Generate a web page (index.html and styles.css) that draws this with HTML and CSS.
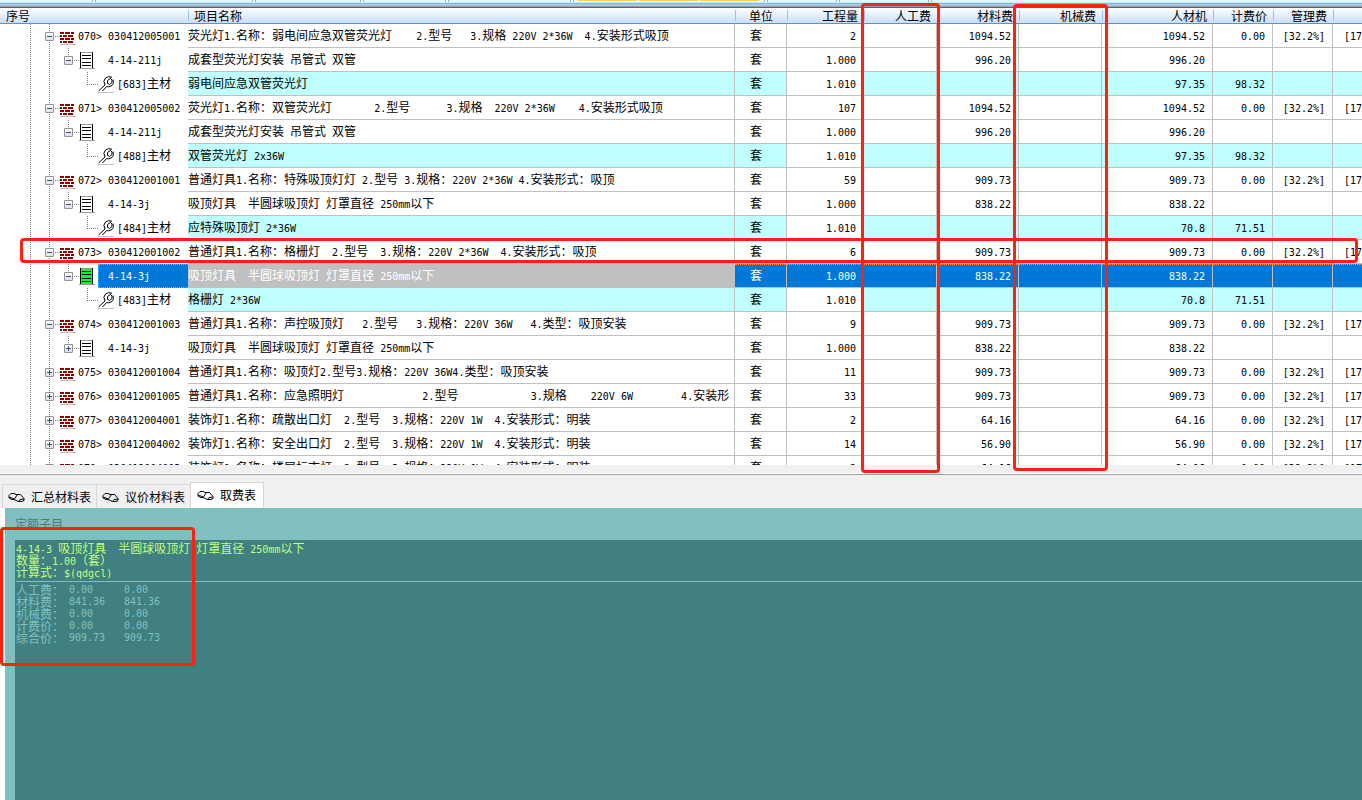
FILE: index.html
```html
<!DOCTYPE html>
<html lang="zh-CN">
<head>
<meta charset="utf-8">
<title>工程量清单</title>
<link rel="stylesheet" href="styles.css">
</head>
<body>
<svg class="sprite" aria-hidden="true">
  <symbol id="i-brick" viewBox="0 0 16 17">
    <path fill="#8b0000" d="M0 4h4v2H0zM5 4h5v2H5zM11 4h3v2h-3zM0 7h2v2H0zM3 7h4v2H3zM8 7h5v2H8zM0 10h4v2H0zM5 10h5v2H5zM11 10h3v2h-3zM0 13h2v2H0zM3 13h4v2H3zM8 13h5v2H8z"/>
    <path fill="#c0c0c0" d="M0 16h16v1H0z"/>
  </symbol>
  <symbol id="i-list" viewBox="0 0 16 17">
    <path fill="#808080" d="M1 0h12v1H1zM0 16h16v1H0z" opacity=".8"/>
    <path fill="#000" d="M1 0h1v16H1zM13 0h1v16h-1zM3 3h9v1H3zM3 6h9v1H3zM3 10h9v1H3zM3 13h9v1H3z"/>
  </symbol>
  <symbol id="i-wrench" viewBox="0 0 17 17">
    <path fill="#fff" stroke="#000" stroke-width="1" d="M.5 15 7 9Q4.500 5 7.500 2Q10 0 13.500 1l-1 1.500M15 3.500Q16.500 8 13 10q-2.500 1.500-4.500.500L4.500 15M12.500 2.500 9.500 4.500v3l2 1L14 6.500V4z"/>
    <path fill="#c0c0c0" d="M0 16h16v1H0z"/>
  </symbol>
  <symbol id="i-book" viewBox="0 0 17 12">
    <path fill="none" stroke="#000" d="M6 8.500H4L1 7V4.500L3 2.500h3L8 3.500h4.500L16 7.500v2l-2 1H10.500L6 8.500 9.500 3.500M1.500 6 6 8M10.500 10.500l1.500-2 4-.500"/>
  </symbol>
</svg>
<div class="app">
  <section class="list-pane">
    <div class="toolbar-edge"><i></i><i></i><i></i></div>
    <table class="bill">
      <colgroup>
        <col class="c-tree"><col><col class="c-unit"><col class="c-qty"><col class="c-labor"><col class="c-mat"><col class="c-mach"><col class="c-sum"><col class="c-fee"><col class="c-fee"><col class="c-last">
      </colgroup>
      <thead>
        <tr><th class="first">序号</th><th class="name">项目名称</th><th class="unit">单位</th><th>工程量</th><th>人工费</th><th>材料费</th><th>机械费</th><th>人材机</th><th>计费价</th><th>管理费</th><th></th></tr>
      </thead>
      <tbody id="rows"></tbody>
    </table>
  </section>
  <section class="detail-pane">
    <div class="tabs" role="tablist">
      <button class="tab" role="tab"><svg><use href="#i-book"/></svg>汇总材料表</button>
      <button class="tab" role="tab"><svg><use href="#i-book"/></svg>议价材料表</button>
      <button class="tab active" role="tab" aria-selected="true"><svg><use href="#i-book"/></svg>取费表</button>
    </div>
    <div class="detail">
      <h2>定额子目</h2>
      <div class="card">
        <div class="summary">
          <p data-mixed>4-14-3 吸顶灯具  半圆球吸顶灯 灯罩直径 250mm以下</p>
          <p data-mixed>数量：1.00（套）</p>
          <p data-mixed>计算式：$(qdgcl)</p>
        </div>
        <table class="fees">
          <tr><th>人工费：</th><td>0.00</td><td>0.00</td></tr>
          <tr><th>材料费：</th><td>841.36</td><td>841.36</td></tr>
          <tr><th>机械费：</th><td>0.00</td><td>0.00</td></tr>
          <tr><th>计费价：</th><td>0.00</td><td>0.00</td></tr>
          <tr><th>综合价：</th><td>909.73</td><td>909.73</td></tr>
        </table>
      </div>
    </div>
  </section>
  <div class="mark mark-labor"></div>
  <div class="mark mark-mach"></div>
  <div class="mark mark-row"></div>
  <div class="mark mark-detail"></div>
</div>
<script src="script.js"></script>
</body>
</html>
```
FILE: styles.css
```css
* { box-sizing: border-box; }
body {
  margin: 0;
  background: #f0f0f0;
  color: #000;
  font: 10px "DejaVu Sans Mono", "Noto Sans CJK SC", monospace;
}
button { font: inherit; color: inherit; }
.cjk, th, .tab, h2 { font-family: "Noto Sans CJK SC", sans-serif; font-size: 12px; font-weight: 400; }
.cjk { line-height: 1; }
.sprite { position: absolute; width: 0; height: 0; }

.app {
  position: relative;
  display: grid;
  grid-template-rows: 465fr 335fr;
  height: 100vh;
  overflow: hidden;
}
.list-pane { min-height: 0; overflow: hidden; background: #fff; }

.toolbar-edge {
  --tick: linear-gradient(90deg, #90b0c0 1px, #fff 1px 3px, #90b0c0 3px);
  display: flex;
  gap: 2px;
  height: 8px;
  padding-left: 578px;
  background:
    var(--tick) 92px 0 / 4px 2px no-repeat,
    var(--tick) 252px 0 / 4px 2px no-repeat,
    var(--tick) 360px 0 / 4px 2px no-repeat,
    var(--tick) 445px 0 / 4px 2px no-repeat,
    var(--tick) 570px 0 / 4px 2px no-repeat,
    var(--tick) 764px 0 / 4px 2px no-repeat,
    var(--tick) 836px 0 / 4px 2px no-repeat,
    var(--tick) 928px 0 / 4px 2px no-repeat,
    linear-gradient(#e0f8ff 0 2px, #c0f0f8 2px 3px, #80bcd0 3px 4px, #b0c4e0 4px 6px, #90a0b8 6px 7px, #686060 7px);
}
.toolbar-edge i { width: 59px; height: 1px; background: #ffd050; }

.bill { width: 100%; table-layout: fixed; border-collapse: separate; border-spacing: 0; }
.c-tree { width: 188px; }
.c-unit { width: 52px; }
.c-qty { width: 77px; }
.c-labor { width: 73px; }
.c-mat { width: 82px; }
.c-mach { width: 83px; }
.c-sum { width: 111px; }
.c-fee { width: 60px; }
.c-last { width: 29px; }

.bill th {
  height: 16px;
  padding: 0 6px 0 0;
  line-height: 15px;
  text-align: right;
  white-space: nowrap;
  border-bottom: 1px solid #6090d0;
  background: linear-gradient(#90c0f0, #90c0f0) 0 2px / 1px 11px no-repeat, linear-gradient(#fff, #e4effc 50%, #c8defc);
}
.bill th.first { padding-left: 6px; text-align: left; background: linear-gradient(#fff, #e4effc 50%, #c8defc); }
.bill th.name { padding-left: 6px; text-align: left; }
.bill th.unit { padding-left: 14px; text-align: left; }

.bill td {
  height: 24px;
  padding: 3px 7px 0 0;
  line-height: 20px;
  text-align: right;
  white-space: pre;
  overflow: hidden;
  border-right: 1px solid #c0c0c0;
  border-bottom: 1px solid #c0c0c0;
}
.bill td.name { padding: 3px 0 0; text-align: left; }
.bill td.unit { padding: 3px 0 0 15px; text-align: left; }
.bill td.last { padding: 3px 0 0 11px; text-align: left; border-right: 0; }
.bill .material td { background: #c0ffff; }
.bill .material td.qty { background: #fff; }
.bill .selected td { padding-top: 2px; background: #0078d7; color: #fff; border-top: 1px dotted #ff9040; }
.bill .selected td.name { background: #c0c0c0; border-top-color: #c0c0c0; }

.bill td.tree,
.bill .material td.tree,
.bill .selected td.tree {
  padding: 0;
  border: 0;
  color: #000;
  text-align: left;
  background:
    repeating-linear-gradient(#808080 0 1px, #fff 1px 2px) 30px 0 / 1px 24px no-repeat,
    repeating-linear-gradient(#808080 0 1px, #fff 1px 2px) 49px 0 / 1px 24px no-repeat,
    #fff;
}
.node { display: flex; align-items: center; height: 24px; }
.node svg { flex: none; width: 16px; height: 17px; }
.node .code { flex: 1; height: 24px; padding-top: 3px; line-height: 20px; }
.level-0 {
  padding-left: 45px;
  background: repeating-linear-gradient(90deg, #808080 0 1px, #fff 1px 2px) 55px 12px / 5px 1px no-repeat;
}
.level-0 .code { padding-left: 2px; }
.level-1 {
  padding-left: 64px;
  background:
    repeating-linear-gradient(#808080 0 1px, #fff 1px 2px) 68px 0 / 1px 9px no-repeat,
    repeating-linear-gradient(90deg, #808080 0 1px, #fff 1px 2px) 74px 12px / 5px 1px no-repeat;
}
.level-1 .code { margin-left: 3px; padding-left: 10px; }
.level-2 {
  padding-left: 98px;
  background:
    repeating-linear-gradient(#808080 0 1px, #fff 1px 2px) 87px 0 / 1px 12px no-repeat,
    repeating-linear-gradient(90deg, #808080 0 1px, #fff 1px 2px) 87px 12px / 12px 1px no-repeat;
}
.level-2 svg { width: 17px; }
.level-2 .code { padding-left: 2px; }
.selected .level-1 .code { padding-top: 2px; padding-left: 9px; color: #fff; background: #0078d7; border: 1px dotted #ff9040; border-right: 0; }
.selected .node svg { background: linear-gradient(#00ff20, #00ff20) 1px 1px / 13px 15px no-repeat; }

.expander {
  flex: none;
  width: 9px;
  height: 9px;
  margin-right: 6px;
  padding: 0;
  border: 1px solid #909090;
  border-radius: 1px;
  background:
    linear-gradient(#3050a0, #3050a0) 1px 3px / 5px 1px no-repeat,
    linear-gradient(#fff, #e0e0e0);
}
.expander.closed {
  background:
    linear-gradient(#3050a0, #3050a0) 1px 3px / 5px 1px no-repeat,
    linear-gradient(#3050a0, #3050a0) 3px 1px / 1px 5px no-repeat,
    linear-gradient(#fff, #e0e0e0);
}

.detail-pane { display: flex; flex-direction: column; min-height: 0; padding-top: 8px; }
.tabs {
  display: flex;
  align-items: flex-end;
  height: 35px;
  padding-left: 2px;
  border-top: 1px solid #fff;
  box-shadow: inset 0 1px #a0a0a0;
}
.tab {
  display: flex;
  align-items: center;
  gap: 6px;
  height: 24px;
  padding: 0 5px;
  border: 1px solid #d8d8d8;
  border-right: 0;
  border-bottom: 0;
  background: #f0f0f0;
  white-space: nowrap;
}
.tab.active { height: 26px; padding: 0 7px 2px 6px; border-right: 1px solid #d8d8d8; background: #fff; }
.tab svg { width: 17px; height: 12px; }

.detail {
  flex: 1;
  display: flex;
  flex-direction: column;
  padding: 10px 0 0 10px;
  border-left: 5px solid #fff;
  background: #80c0c0;
}
.detail h2 { height: 10px; margin: 0 0 12px; line-height: 12px; color: #408080; overflow: hidden; }
.card { flex: 1; padding: 2px 0 0 1px; background: #408080; color: #80c0c0; line-height: 12px; }
.summary { padding-bottom: 3px; border-bottom: 1px solid #80c0c0; color: #c0ff80; }
.summary p { height: 12px; margin: 0; white-space: pre; }
.fees { margin-top: 2px; border-spacing: 0; }
.fees th { width: 53px; height: 12px; padding: 0; line-height: 12px; text-align: left; white-space: nowrap; }
.fees td { width: 55px; height: 12px; padding: 0; }

.mark { position: absolute; border: 3px solid #ff2010; border-radius: 4px; pointer-events: none; }
.mark-labor { top: 3px; right: 422px; width: 79px; height: 470px; }
.mark-mach { top: 4px; right: 254px; width: 95px; height: 467px; }
.mark-row { top: 238px; left: 20px; right: 4px; height: 25px; }
.mark-detail { top: 527px; left: 0; width: 195px; height: 139px; }
```
FILE: script.js
```js
const SUB = '吸顶灯具  半圆球吸顶灯 灯罩直径 250mm以下';
const FLUOR = '成套型荧光灯安装 吊管式 双管';
// level, code, name, quantity, material, total, fee base, flag
const items = [
  [0, '070> 030412005001', '荧光灯1.名称：弱电间应急双管荧光灯    2.型号   3.规格 220V 2*36W  4.安装形式吸顶', '2', '1094.52', '1094.52', '0.00'],
  [1, '4-14-211j', FLUOR, '1.000', '996.20', '996.20', ''],
  [2, '[683]主材', '弱电间应急双管荧光灯', '1.010', '', '97.35', '98.32'],
  [0, '071> 030412005002', '荧光灯1.名称：双管荧光灯       2.型号      3.规格  220V 2*36W    4.安装形式吸顶', '107', '1094.52', '1094.52', '0.00'],
  [1, '4-14-211j', FLUOR, '1.000', '996.20', '996.20', ''],
  [2, '[488]主材', '双管荧光灯 2x36W', '1.010', '', '97.35', '98.32'],
  [0, '072> 030412001001', '普通灯具1.名称：特殊吸顶灯灯 2.型号 3.规格：220V 2*36W 4.安装形式：吸顶', '59', '909.73', '909.73', '0.00'],
  [1, '4-14-3j', SUB, '1.000', '838.22', '838.22', ''],
  [2, '[484]主材', '应特殊吸顶灯 2*36W', '1.010', '', '70.8', '71.51'],
  [0, '073> 030412001002', '普通灯具1.名称：格栅灯  2.型号  3.规格：220V 2*36W  4.安装形式：吸顶', '6', '909.73', '909.73', '0.00'],
  [1, '4-14-3j', SUB, '1.000', '838.22', '838.22', '', 'selected'],
  [2, '[483]主材', '格栅灯 2*36W', '1.010', '', '70.8', '71.51'],
  [0, '074> 030412001003', '普通灯具1.名称：声控吸顶灯   2.型号   3.规格：220V 36W   4.类型：吸顶安装', '9', '909.73', '909.73', '0.00'],
  [1, '4-14-3j', SUB, '1.000', '838.22', '838.22', '', 'closed'],
  [0, '075> 030412001004', '普通灯具1.名称：吸顶灯2.型号3.规格：220V 36W4.类型：吸顶安装', '11', '909.73', '909.73', '0.00', 'closed'],
  [0, '076> 030412001005', '普通灯具1.名称：应急照明灯             2.型号            3.规格    220V 6W        4.安装形', '33', '909.73', '909.73', '0.00', 'closed'],
  [0, '077> 030412004001', '装饰灯1.名称：疏散出口灯  2.型号  3.规格：220V 1W  4.安装形式：明装', '2', '64.16', '64.16', '0.00', 'closed'],
  [0, '078> 030412004002', '装饰灯1.名称：安全出口灯  2.型号  3.规格：220V 1W  4.安装形式：明装', '14', '56.90', '56.90', '0.00', 'closed'],
  [0, '079> 030412004003', '装饰灯1.名称：楼层标志灯  2.型号  3.规格：220V 1W  4.安装形式：明装', '2', '64.16', '64.16', '0.00', 'closed']
];

// Chinese runs are set in a larger size than the half-width text around them.
const mixed = text => text
  .replace(/>/g, '&gt;')
  .replace(/[\u3000-\u9fff\uff00-\uffef]+/g, run => `<span class="cjk">${run}</span>`);

const icons = ['i-brick', 'i-list', 'i-wrench'];

document.getElementById('rows').innerHTML = items.map(([level, code, name, qty, mat, total, fee, flag]) => {
  const expander = level < 2
    ? `<button class="expander ${flag === 'closed' ? 'closed' : ''}" aria-label="${flag === 'closed' ? '展开' : '折叠'}"></button>`
    : '';
  const rowClass = level === 2 ? 'material' : flag === 'selected' ? 'selected' : '';
  return `<tr class="${rowClass}">
<td class="tree"><div class="node level-${level}">${expander}<svg><use href="#${icons[level]}"/></svg><span class="code">${mixed(code)}</span></div></td>
<td class="name">${mixed(name)}</td><td class="unit">${mixed('套')}</td><td class="qty">${qty}</td><td></td><td>${mat}</td><td></td><td>${total}</td><td>${fee}</td>
<td>${level ? '' : '[32.2%]'}</td><td class="last">${level ? '' : '[17'}</td></tr>`;
}).join('');

document.querySelectorAll('[data-mixed]').forEach(el => {
  el.innerHTML = mixed(el.textContent);
});
```
